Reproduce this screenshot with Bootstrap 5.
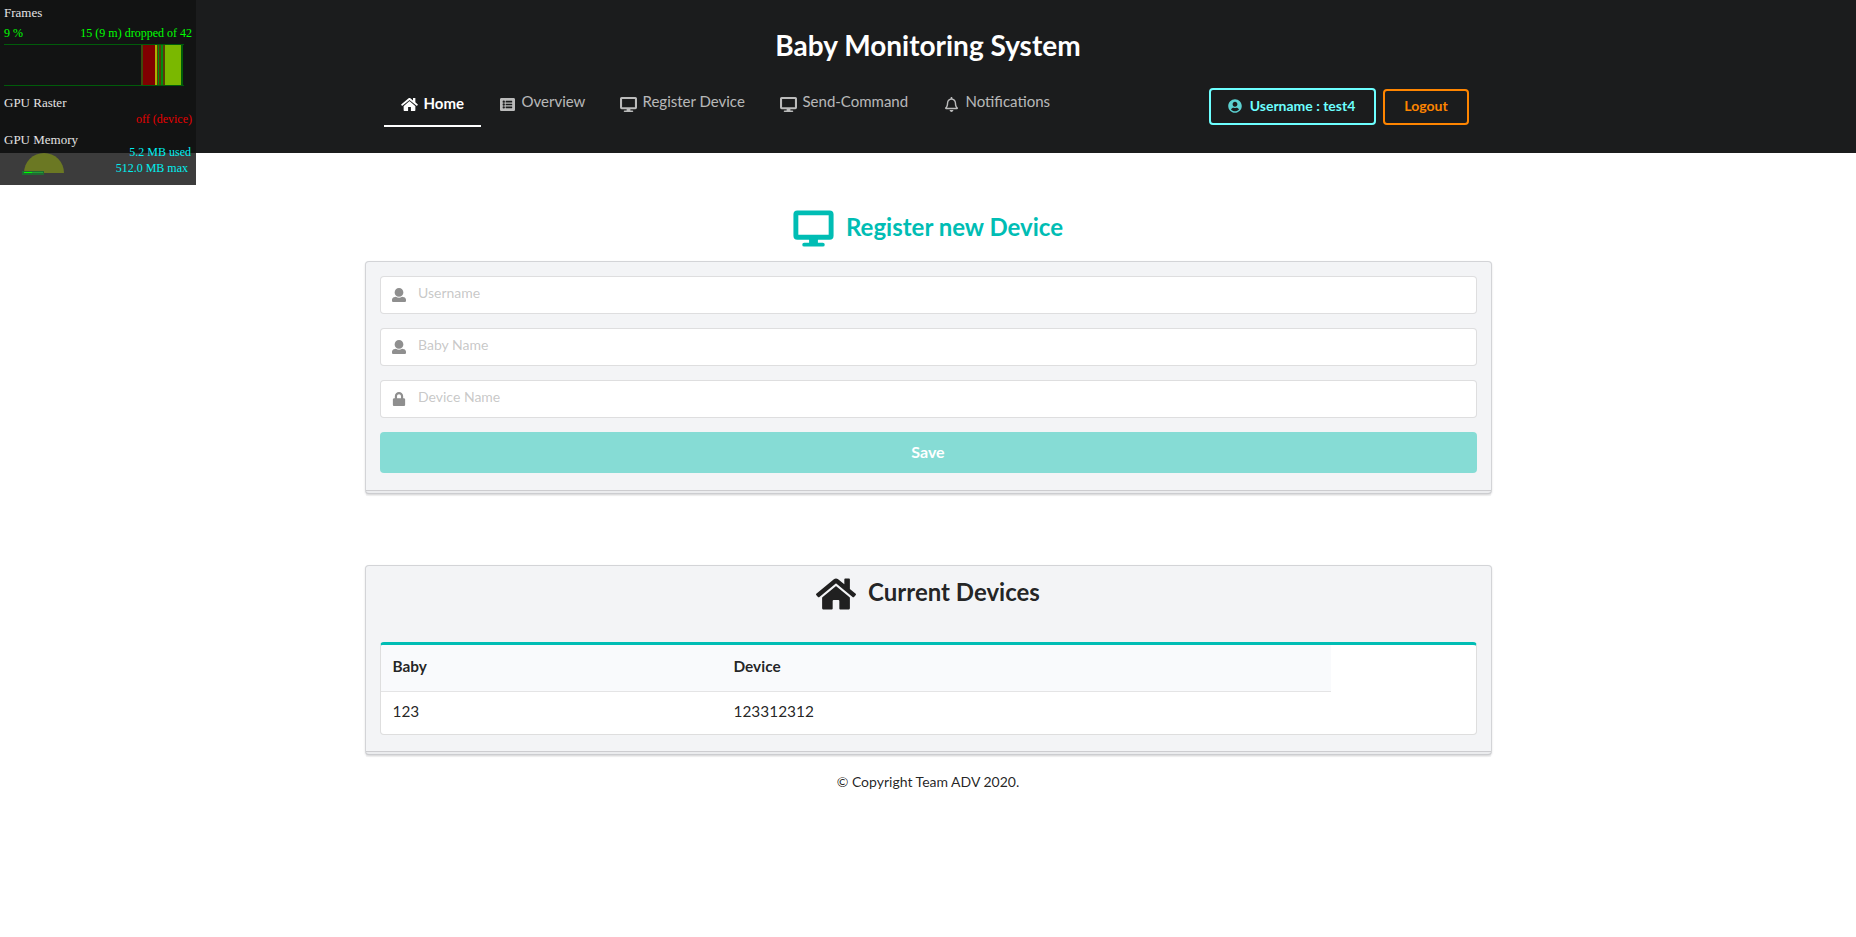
<!DOCTYPE html>
<html lang="en">
<head>
<meta charset="utf-8">
<meta name="viewport" content="width=device-width, initial-scale=1">
<title>Baby Monitoring System</title>
<link href="https://cdn.jsdelivr.net/npm/bootstrap@5.3.0/dist/css/bootstrap.min.css" rel="stylesheet">
<style>
body{font-family:Lato,sans-serif;font-size:14px;line-height:20px;color:rgba(0,0,0,.87);background:#fff}
svg{display:block;fill:currentColor;flex:none}
.wrap{width:1127px;margin-left:364.5px}
.masthead{background:#1b1c1d;height:153px;padding-top:27px}
.masthead h1{font-size:28px;line-height:36px;font-weight:700;color:#fff;margin:0;text-align:center}
.menu-row{padding:23px 23px 0 19px;height:64px}
.menu-row .nav-link{padding:0;color:rgba(255,255,255,.7);font-size:15px;line-height:20px;height:41px;display:flex;white-space:nowrap}
.menu-row .nav-link.active{width:97px;padding:7px 0 0 17px;font-weight:700;color:#fff;border-bottom:2px solid #fff}
.menu-row .nav-link:not(.active){padding-top:5px}
.tag-btn{--bs-btn-border-width:2px;--bs-btn-border-radius:4px;--bs-btn-font-size:14px;--bs-btn-font-weight:700;--bs-btn-line-height:14px;padding:0 0 2px;display:flex;align-items:center;justify-content:center}
.btn-user{width:167px;height:37px;color:#6dffff;border-color:#6dffff;padding-right:1px}
.btn-user svg{opacity:.8;margin:1px 8px 0 0}
.btn-exit{width:86px;height:36px;color:#ff8500;border-color:#ff8500;margin-top:1px;padding-left:1px}
.section-title{font-size:24px;line-height:31px;font-weight:700;margin:0}
.teal{color:#00bdb4}
.panel{position:relative;background:#f3f4f6;border:1px solid rgba(34,36,38,.15);border-radius:4px;box-shadow:0 1px 2px 0 rgba(34,36,38,.15);padding:14px}
.panel::after{content:"";position:absolute;left:0;bottom:-3px;width:100%;height:6px;border-top:1px solid rgba(34,36,38,.15);background:rgba(0,0,0,.03)}
.field-box{height:38px;margin-bottom:14px;background:#fff;border:1px solid rgba(34,36,38,.15);border-radius:4px;padding:11px 11px 0;display:flex;color:#8f8f8f}
.field-box input{border:0;padding:0;margin-top:-5px;height:20px;line-height:20px;font-size:14px;background:none;outline:0;box-shadow:none;flex:1}
.field-box input::placeholder{color:rgba(191,191,191,.87);opacity:1}
.btn-save{display:block;width:100%;height:41px;padding:0;border:0;border-radius:4px;background:#86dcd5;color:#fff;font-size:16px;font-weight:700;line-height:39px;padding-bottom:2px}
.btn-save:hover{background:#86dcd5;color:#fff}
.device-box{background:#fff;border:1px solid rgba(34,36,38,.15);border-top:3px solid #00bdb4;border-radius:4px;height:93px;overflow:hidden}
.device-table{width:950px;margin:0;font-size:15.4px;line-height:20px;--bs-table-bg:transparent;color:rgba(0,0,0,.87)}
.device-table th,.device-table td{border:0;padding:0 12px;color:inherit}
.device-table th{height:46px;padding-bottom:4px;background:#f9fafc;border-bottom:1px solid rgba(34,36,38,.12);vertical-align:middle}
.device-table td{height:42px;padding-bottom:2px;vertical-align:middle}
.device-table th:first-child{width:341px}
.stats{position:absolute;left:0;top:0;width:196px;height:185px;background:rgba(17,17,17,.82);font-family:"Liberation Serif",serif;font-size:13px;line-height:16px;color:#e4e4e4;padding:5px 4px 0}
.stats .s12{font-size:12px}
.stats .green{color:#0f0}
.stats .red{color:#e60000}
.stats .aqua{color:#00f0f0}
</style>
</head>
<body>
<header class="masthead">
  <div class="wrap">
    <h1>Baby Monitoring System</h1>
    <div class="menu-row d-flex">
      <nav class="nav flex-nowrap me-auto">
        <a class="nav-link active" href="#"><svg width="17" height="15" viewBox="0 0 576 512" style="margin:4px 6px 0 0"><path id="home" d="M488 312.7V456c0 13.3-10.7 24-24 24H348c-6.6 0-12-5.4-12-12V356c0-6.6-5.4-12-12-12h-72c-6.6 0-12 5.4-12 12v112c0 6.6-5.4 12-12 12H112c-13.3 0-24-10.7-24-24V312.7c0-3.6 1.6-7 4.4-9.3l188-154.8c4.4-3.6 10.8-3.6 15.3 0l188 154.8c2.7 2.3 4.3 5.7 4.3 9.3zm83.6-60.9L488 182.9V44.4c0-6.6-5.4-12-12-12h-56c-6.6 0-12 5.4-12 12V117l-89.5-73.7c-17.7-14.6-43.3-14.6-61 0L4.4 251.8c-5.1 4.2-5.8 11.8-1.6 16.9l25.5 31c4.2 5.1 11.8 5.8 16.9 1.6l235.2-193.7c4.4-3.6 10.8-3.6 15.3 0l235.2 193.7c5.1 4.2 12.7 3.5 16.9-1.6l25.5-31c4.2-5.2 3.4-12.7-1.7-16.9z"/></svg>Home</a>
        <a class="nav-link" href="#" style="margin-left:19px;width:101px"><svg width="15" height="15" viewBox="0 0 512 512" style="margin:6px 7px 0 0"><path fill-rule="evenodd" d="M464 480H48c-26.5 0-48-21.500-48-48V80c0-26.500 21.500-48 48-48h416c26.500 0 48 21.500 48 48v352c0 26.500-21.500 48-48 48zM128 120a40 40 0 1 0 0 80 40 40 0 1 0 0-80zm0 96a40 40 0 1 0 0 80 40 40 0 1 0 0-80zm0 96a40 40 0 1 0 0 80 40 40 0 1 0 0-80zM204 132h200q12 0 12 12v32q0 12-12 12H204q-12 0-12-12v-32q0-12 12-12zm0 96h200q12 0 12 12v32q0 12-12 12H204q-12 0-12-12v-32q0-12 12-12zm0 96h200q12 0 12 12v32q0 12-12 12H204q-12 0-12-12v-32q0-12 12-12z"/></svg>Overview</a>
        <a class="nav-link" href="#" style="margin-left:19px;width:141px"><svg width="17" height="15" viewBox="0 0 41 37" preserveAspectRatio="none" style="margin:6px 6px 0 0"><path id="tv" fill-rule="evenodd" d="M4 0H37Q41 0 41 4V26Q41 30 37 30H25V33H30Q32 33 32 35T30 37H11Q9 37 9 35T11 33H16V30H4Q0 30 0 26V4Q0 0 4 0ZM5 5V25H36V5Z"/></svg>Register Device</a>
        <a class="nav-link" href="#" style="margin-left:19px;width:146px"><svg width="17" height="15" viewBox="0 0 41 37" preserveAspectRatio="none" style="margin:6px 6px 0 0"><use href="#tv"/></svg>Send-Command</a>
        <a class="nav-link" href="#" style="margin-left:19px"><svg width="13" height="15" viewBox="0 0 448 512" style="margin:6px 8px 0 0"><path d="M439.390 362.290c-19.320-20.760-55.470-51.990-55.470-154.290 0-77.700-54.480-139.900-127.940-155.160V32c0-17.670-14.320-32-31.980-32s-31.980 14.330-31.980 32v20.840C118.560 68.100 64.080 130.300 64.080 208c0 102.300-36.150 133.530-55.470 154.290-6 6.450-8.660 14.160-8.610 21.710.11 16.400 12.980 32 32.100 32h383.800c19.120 0 32-15.600 32.100-32 .05-7.550-2.610-15.270-8.610-21.710zM67.530 368c21.220-27.970 44.420-74.330 44.530-159.420 0-.2-.06-.38-.06-.58 0-61.860 50.140-112 112-112s112 50.140 112 112c0 .2-.06.38-.06.58.11 85.100 23.310 131.460 44.530 159.420H67.530zM224 512c35.320 0 63.970-28.650 63.970-64H160.030c0 35.350 28.650 64 63.970 64z"/></svg>Notifications</a>
      </nav>
      <div class="d-flex align-items-start" style="gap:7px;padding-top:2px">
        <button class="btn tag-btn btn-user" type="button"><svg width="14" height="14" viewBox="0 0 496 512"><path d="M248 8C111 8 0 119 0 256s111 248 248 248 248-111 248-248S385 8 248 8zm0 96c48.600 0 88 39.400 88 88s-39.400 88-88 88-88-39.400-88-88 39.400-88 88-88zm0 344c-58.700 0-111.300-26.600-146.500-68.200 18.800-35.400 55.600-59.800 98.500-59.800 2.400 0 4.800.4 7.100 1.100 13 4.200 26.600 6.900 40.900 6.900s28-2.700 40.900-6.900c2.300-.7 4.700-1.100 7.100-1.100 42.900 0 79.700 24.400 98.500 59.800C359.300 421.400 306.700 448 248 448z"/></svg>Username : test4</button>
        <button class="btn tag-btn btn-exit" type="button">Logout</button>
      </div>
    </div>
  </div>
</header>

<main class="wrap">
  <div class="d-flex justify-content-center" style="padding-top:57px;height:108px">
    <svg class="teal" width="41" height="37" viewBox="-.3 -.4 41.600 37.800"><use href="#tv"/></svg>
    <h2 class="section-title teal" style="margin-left:12px;margin-top:1px">Register new Device</h2>
  </div>
  <form class="panel" style="height:233px">
    <label class="field-box"><svg width="14" height="14" viewBox="0 0 512 512" style="margin-right:12.5px"><path id="person" d="M256 0c88.366 0 160 71.634 160 160s-71.634 160-160 160S96 248.366 96 160 167.634 0 256 0zm183.283 333.821l-71.313-17.828c-74.923 53.890-165.738 41.864-223.940 0l-71.313 17.828C29.981 344.505 0 382.903 0 426.955V464c0 26.510 21.490 48 48 48h416c26.510 0 48-21.490 48-48v-37.045c0-44.052-29.981-82.450-72.717-93.134z"/></svg><input type="text" placeholder="Username"></label>
    <label class="field-box"><svg width="14" height="14" viewBox="0 0 512 512" style="margin-right:12.5px"><use href="#person"/></svg><input type="text" placeholder="Baby Name"></label>
    <label class="field-box"><svg width="14" height="14" viewBox="-32 0 512 512" style="margin-right:12.5px"><path d="M400 224h-24v-72C376 68.200 307.800 0 224 0S72 68.200 72 152v72H48c-26.500 0-48 21.500-48 48v192c0 26.500 21.500 48 48 48h352c26.500 0 48-21.500 48-48V272c0-26.500-21.500-48-48-48zm-104 0H152v-72c0-39.700 32.300-72 72-72s72 32.300 72 72v72z"/></svg><input type="text" placeholder="Device Name"></label>
    <button class="btn btn-save" type="button">Save</button>
  </form>

  <section class="panel" style="height:190px;margin-top:71px;padding-top:10px">
    <div class="d-flex justify-content-center" style="height:66px">
      <svg width="40" height="36" viewBox="0 0 576 512"><use href="#home"/></svg>
      <h2 class="section-title" style="margin-left:12px">Current Devices</h2>
    </div>
    <div class="device-box">
      <table class="table device-table">
        <thead><tr><th>Baby</th><th>Device</th></tr></thead>
        <tbody><tr><td>123</td><td>123312312</td></tr></tbody>
      </table>
    </div>
  </section>
  <p class="text-center mb-0" style="padding-top:17px">© Copyright Team ADV 2020.</p>
</main>

<aside class="stats">
  <div>Frames</div>
  <div class="s12 green d-flex justify-content-between" style="padding-top:4px"><span>9 %</span><span>15 (9 m) dropped of 42</span></div>
  <svg width="180" height="43" viewBox="0 0 180 43" shape-rendering="crispEdges" style="margin-top:3px">
    <path fill="#005c0a" d="M0 0h180v1H0zM0 41h180v1H0z"/>
    <path fill="#3f4a0c" d="M137 1h2v40h-2z"/><path fill="#800000" d="M139 1h12v40h-12z"/>
    <path fill="#aab000" d="M151 1h2v40h-2z"/><path fill="#5a3a08" d="M153 1h1v40h-1zM155 1h2v40h-2zM159 1h2v40h-2z"/>
    <path fill="#008a10" d="M154 1h1v40h-1zM157 1h2v40h-2z"/><path fill="#7ab800" d="M161 1h16v40h-16z"/><path fill="#005c0a" d="M177 1h2v40h-2z"/>
  </svg>
  <div style="padding-top:8px">GPU Raster</div>
  <div class="s12 red text-end">off (device)</div>
  <div style="padding-top:5px">GPU Memory</div>
  <div class="d-flex justify-content-between s12" style="margin-top:-4px">
    <svg width="44" height="24" viewBox="0 0 44 24" style="margin:8px 0 0 18px"><path fill="#6b7823" d="M2 21a20 20 0 0 1 40 0z"/><path fill="#1f6b32" d="M0 19h22v4H0z"/><path fill="#0f0" d="M2 20h8v1H2z"/><path fill="#22a034" d="M10 20h11v1H10z"/></svg>
    <div class="aqua text-end"><div style="padding-right:1px">5.2 MB used</div><div style="padding-right:4px">512.0 MB max</div></div>
  </div>
</aside>
<script src="https://cdn.jsdelivr.net/npm/bootstrap@5.3.0/dist/js/bootstrap.bundle.min.js"></script>
</body>
</html>
